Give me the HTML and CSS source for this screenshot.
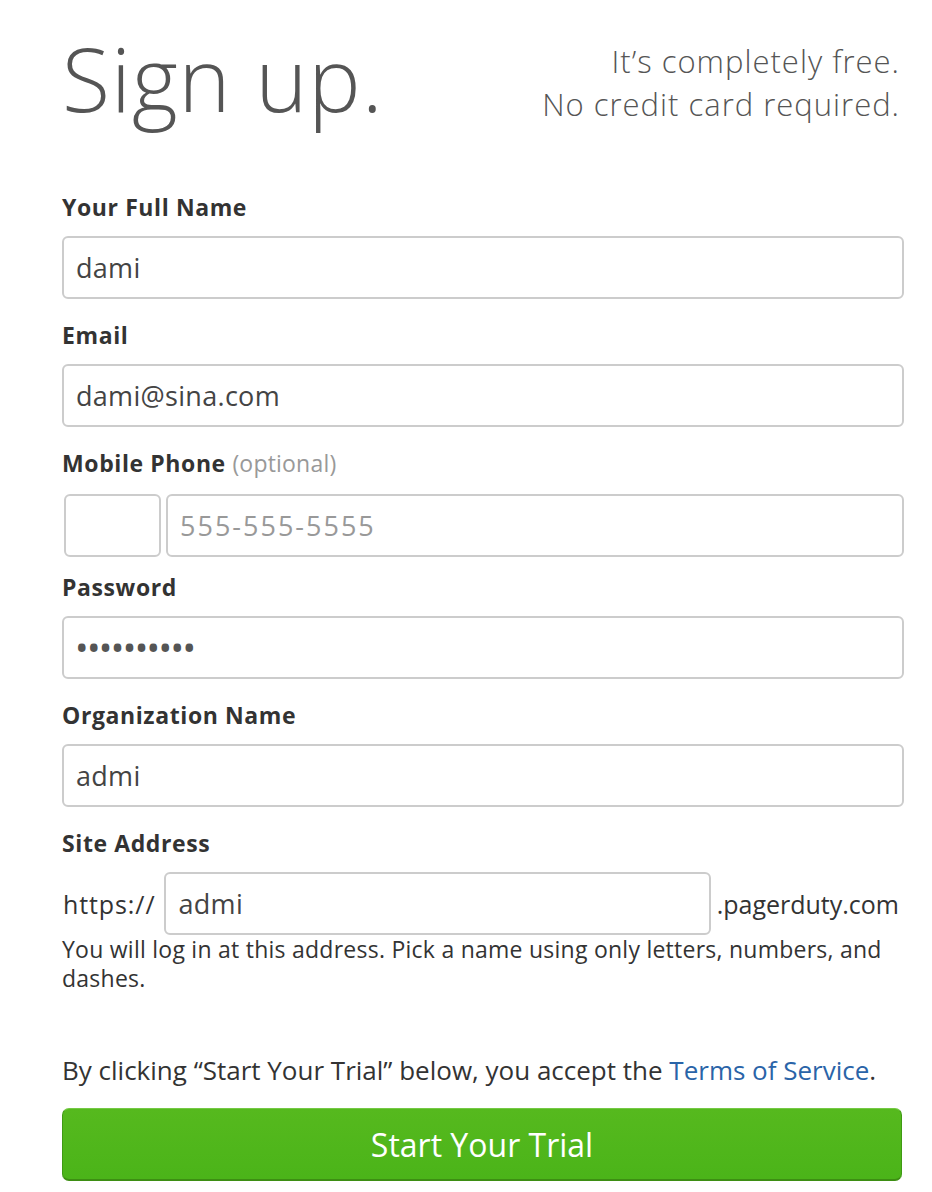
FILE: index.html
```html
<!DOCTYPE html>
<html>
<head>
<meta charset="utf-8">
<link rel="stylesheet" href="styles.css">
</head>
<body>
<div class="page">
  <header class="head">
    <h1 class="title">Sign up.</h1>
    <p class="tagline">It’s completely free.<br>No credit card required.</p>
  </header>
  <form class="form">
    <div class="field">
      <label class="label">Your Full Name</label>
      <div class="input">dami</div>
    </div>
    <div class="field">
      <label class="label">Email</label>
      <div class="input">dami@sina.com</div>
    </div>
    <div class="field field-phone">
      <label class="label">Mobile Phone <span class="opt">(optional)</span></label>
      <div class="phone-row">
        <div class="input cc"></div>
        <div class="input grow placeholder">555-555-5555</div>
      </div>
    </div>
    <div class="field">
      <label class="label">Password</label>
      <div class="input dots">&#8226;&#8226;&#8226;&#8226;&#8226;&#8226;&#8226;&#8226;&#8226;&#8226;</div>
    </div>
    <div class="field">
      <label class="label">Organization Name</label>
      <div class="input">admi</div>
    </div>
    <div class="field field-site">
      <label class="label">Site Address</label>
      <div class="site-row">
        <span class="affix affix-pre">https://</span>
        <div class="input grow">admi</div>
        <span class="affix">.pagerduty.com</span>
      </div>
      <p class="help">You will log in at this address. Pick a name using only letters, numbers, and dashes.</p>
    </div>
    <p class="terms">By clicking “Start Your Trial” below, you accept the <a class="link">Terms of Service</a>.</p>
    <div class="btn">Start Your Trial</div>
  </form>
</div>
</body>
</html>
```

FILE: styles.css
```css
* { box-sizing: border-box; }
body {
  margin: 0;
  background: #fff;
  font-family: "Open Sans", "Liberation Sans", Arial, sans-serif;
  color: #333;
}
.page {
  width: 842px;
  margin-left: 62px;
}
.head {
  display: flex;
  justify-content: space-between;
  align-items: flex-start;
  height: 193px;
}
.title {
  margin: 28px 0 0 0;
  font-weight: 300;
  font-size: 88px;
  line-height: 100px;
  letter-spacing: 1px;
  color: #555;
}
.tagline {
  margin: 40px 4px 0 0;
  text-align: right;
  font-weight: 300;
  font-size: 31px;
  line-height: 43px;
  letter-spacing: 1px;
  color: #555;
}
.form { display: flex; flex-direction: column; }
.field { display: flex; flex-direction: column; margin-bottom: 22px; }
.field-phone { margin-bottom: 16px; }
.field-site { margin-bottom: 0; }
.label {
  font-weight: bold;
  font-size: 23px;
  line-height: 28px;
  letter-spacing: 0.6px;
  color: #333;
  margin-bottom: 15px;
}
.opt { font-weight: normal; color: #999; letter-spacing: 0.2px; }
.input {
  height: 63px;
  border: 2px solid #ccc;
  border-radius: 6px;
  padding: 0 12px;
  display: flex;
  align-items: center;
  font-size: 27px;
  letter-spacing: 0.3px;
  color: #444;
  background: #fff;
}
.placeholder { color: #999; letter-spacing: 2px; }
.dots {
  font-size: 36px;
  letter-spacing: -1.6px;
  color: #555;
  padding-left: 11px;
}
.phone-row { display: flex; gap: 5px; margin: 2px 0 0 2px; }
.cc { width: 97px; flex: none; }
.grow { flex: 1; }
.site-row { display: flex; align-items: center; margin-right: 5px; }
.site-row .input { margin: 0 6px 0 9px; }
.affix { font-size: 25px; color: #333; }
.affix-pre { letter-spacing: 0.9px; margin-left: 1px; }
.help {
  margin: 0;
  font-size: 23px;
  line-height: 29px;
  letter-spacing: 0.25px;
  color: #333;
}
.terms {
  margin: 60px 0 21px 0;
  font-size: 26px;
  line-height: 34px;
  color: #333;
}
.link { color: #2a64a8; }
.btn {
  height: 73px;
  margin-right: 2px;
  border-radius: 7px;
  background: linear-gradient(#56b91e, #4bb419);
  border: 1px solid #3f9a14;
  border-top-color: #74c944;
  border-bottom: 2px solid #3d8e13;
  color: #fff;
  font-size: 32px;
  display: flex;
  align-items: center;
  justify-content: center;
}
```
